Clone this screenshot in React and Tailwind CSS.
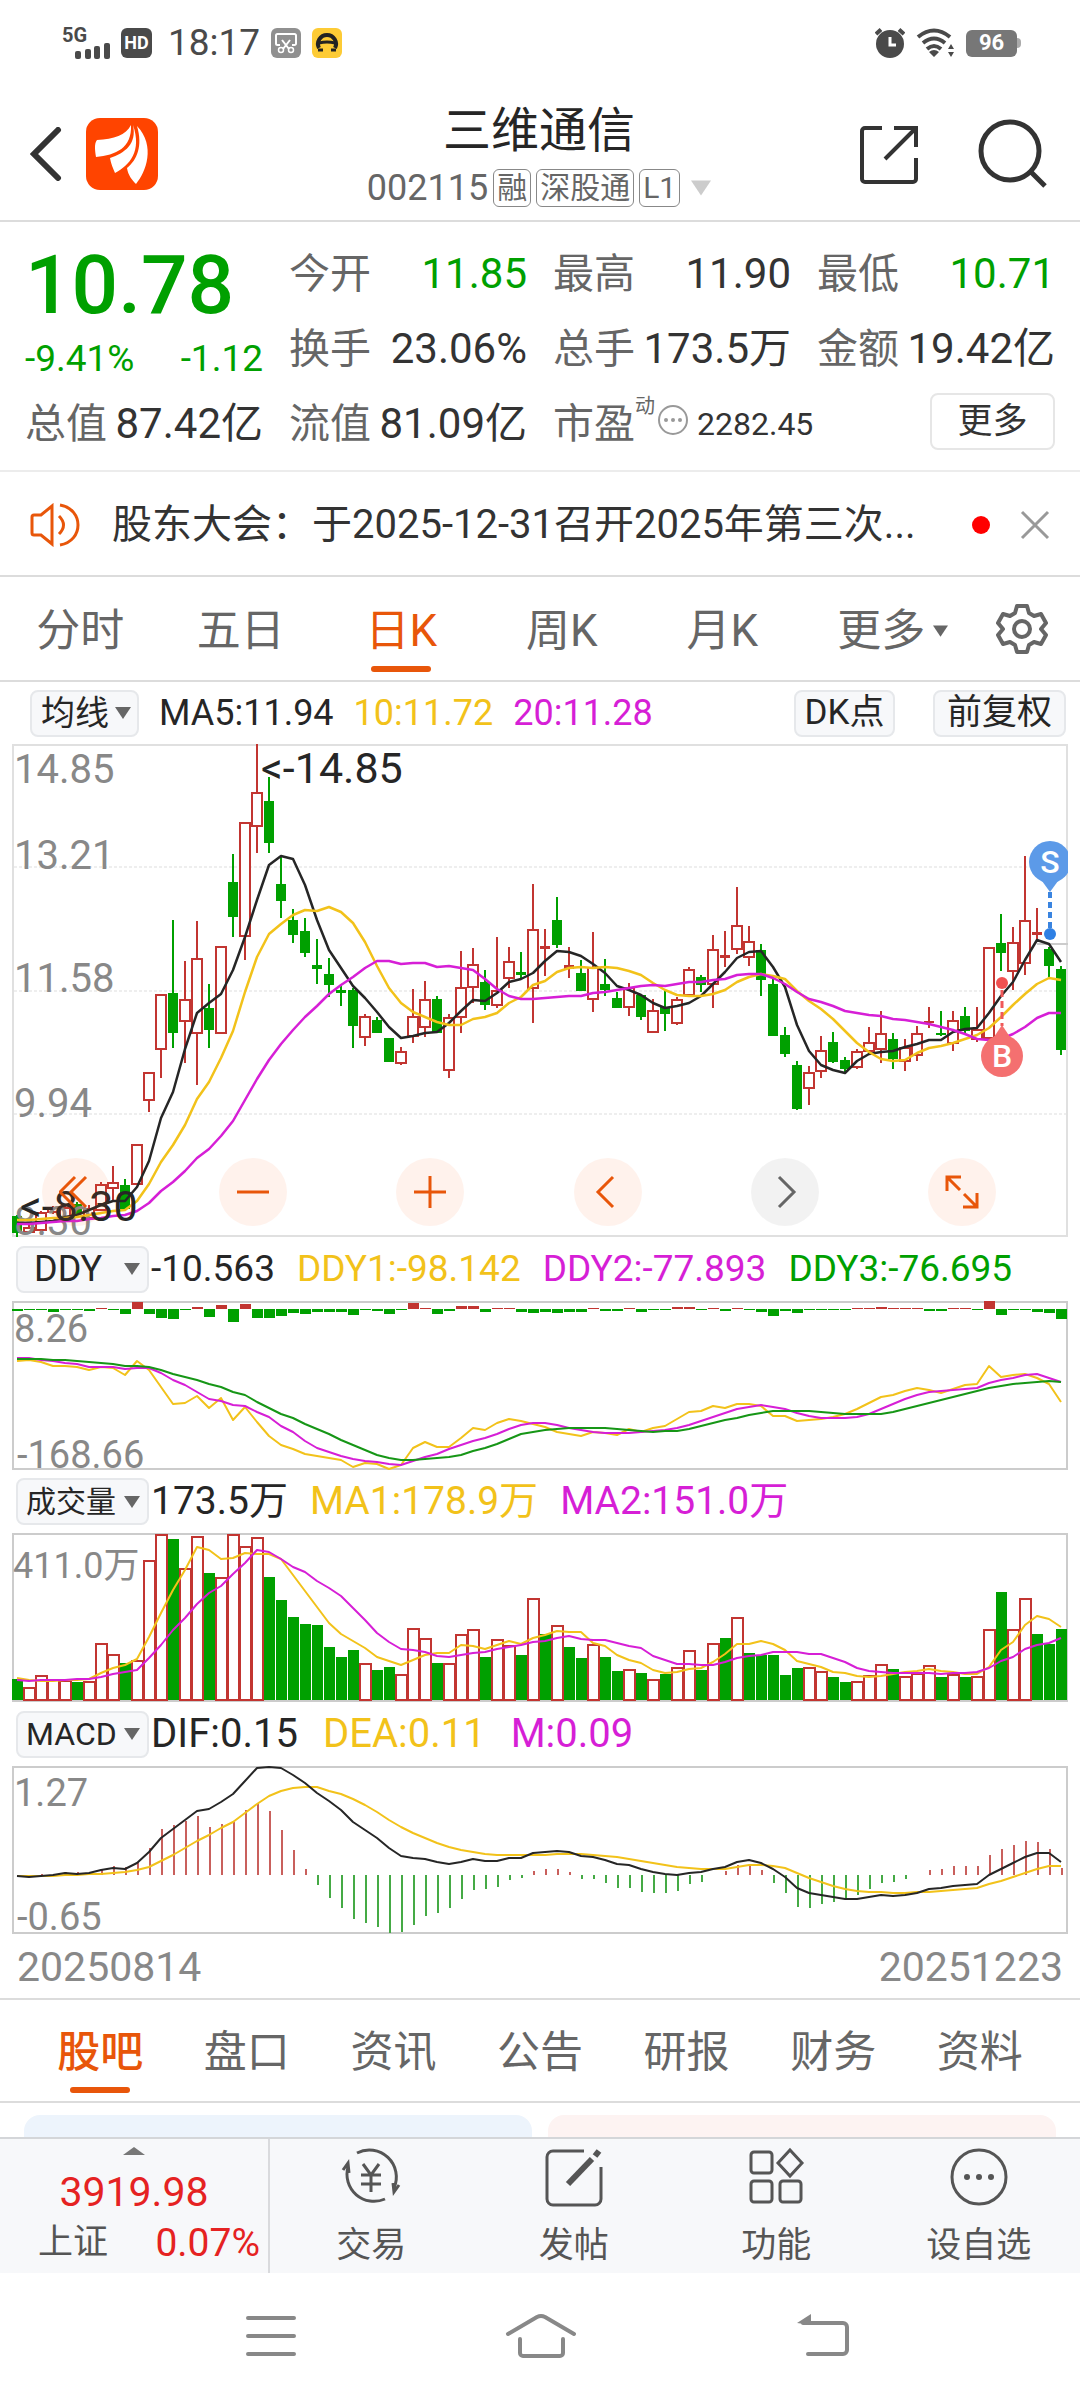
import { useState } from 'react';

const UP = '#c23531';
const DOWN = '#00a000';
const YELLOW = '#f2c21a';
const MAGENTA = '#d61fd6';
const BLACK = '#262626';

// [high, body top, body bottom, low, rising]
const candles = [
    [471, 472, 489, 493, 0], [478, 483, 488, 489, 1], [467, 468, 486, 486, 1], [462, 463, 468, 470, 1],
    [461, 463, 474, 476, 1], [458, 460, 470, 471, 0], [461, 464, 474, 476, 1], [438, 440, 466, 466, 1],
    [422, 438, 444, 456, 1], [435, 441, 465, 466, 0], [400, 400, 440, 440, 1], [328, 328, 356, 368, 1],
    [250, 250, 305, 334, 1], [176, 249, 289, 304, 0], [217, 255, 277, 319, 1], [177, 214, 289, 341, 1],
    [240, 264, 286, 304, 0], [202, 202, 289, 289, 1], [110, 138, 173, 193, 0], [78, 78, 192, 216, 1],
    [0, 48, 82, 109, 1], [33, 57, 99, 109, 0], [112, 140, 157, 174, 0], [165, 176, 191, 199, 0],
    [174, 187, 209, 213, 0], [195, 221, 225, 240, 0], [214, 230, 241, 253, 0], [241, 246, 249, 262, 0],
    [244, 246, 282, 304, 0], [270, 272, 293, 302, 1], [273, 276, 289, 289, 0], [294, 294, 318, 318, 0],
    [303, 307, 319, 321, 1], [245, 272, 292, 299, 1], [237, 255, 283, 293, 1], [252, 255, 289, 289, 0],
    [270, 273, 326, 334, 1], [207, 243, 273, 289, 1], [204, 220, 243, 259, 1], [226, 238, 261, 266, 0],
    [193, 246, 261, 264, 1], [203, 217, 234, 244, 1], [208, 228, 231, 234, 0], [140, 185, 244, 279, 1],
    [185, 202, 205, 232, 1], [153, 176, 201, 204, 0], [203, 221, 225, 234, 1], [216, 229, 247, 247, 0],
    [188, 223, 255, 268, 1], [215, 240, 246, 252, 0], [248, 254, 264, 264, 0], [239, 243, 263, 272, 1],
    [251, 251, 273, 276, 0], [255, 266, 288, 289, 1], [246, 263, 270, 287, 0], [253, 255, 279, 281, 1],
    [223, 225, 251, 253, 1], [231, 233, 241, 248, 0], [191, 205, 240, 264, 1], [187, 211, 214, 223, 1],
    [143, 181, 205, 210, 1], [182, 197, 213, 222, 1], [200, 206, 236, 252, 0], [234, 240, 292, 292, 0],
    [283, 291, 310, 313, 0], [317, 321, 365, 366, 0], [322, 328, 344, 361, 1], [292, 306, 327, 334, 1],
    [288, 298, 318, 319, 0], [313, 316, 325, 328, 0], [305, 307, 323, 325, 1], [283, 298, 307, 310, 1],
    [267, 289, 305, 319, 1], [289, 295, 315, 325, 0], [295, 303, 317, 327, 1], [282, 289, 311, 317, 1],
    [263, 277, 279, 284, 1], [267, 289, 291, 292, 0], [267, 276, 299, 307, 1], [263, 272, 287, 289, 0],
    [263, 285, 295, 298, 1], [203, 203, 294, 308, 1], [170, 199, 209, 227, 0], [183, 198, 227, 246, 1],
    [112, 176, 219, 231, 1], [164, 188, 191, 197, 1], [203, 205, 222, 233, 0], [222, 225, 306, 311, 0],
];

const ma5 = [479, 479, 478, 477, 473, 471, 466, 461, 457, 457, 443, 417, 374, 348, 305, 269, 259, 250, 226, 193, 156, 121, 112, 115, 141, 176, 206, 224, 242, 254, 268, 283, 294, 292, 289, 288, 279, 267, 256, 257, 249, 238, 235, 229, 217, 207, 208, 212, 220, 229, 242, 246, 251, 259, 264, 262, 259, 252, 240, 228, 214, 208, 207, 223, 243, 281, 307, 321, 326, 329, 317, 310, 308, 307, 303, 300, 296, 296, 288, 285, 284, 269, 252, 238, 216, 196, 200, 218];
const ma10 = [476, 476, 475, 474, 474, 473, 471, 469, 467, 466, 457, 440, 418, 401, 381, 355, 338, 314, 287, 248, 213, 190, 180, 171, 166, 167, 163, 168, 179, 198, 222, 244, 259, 268, 273, 278, 281, 281, 275, 273, 269, 259, 253, 241, 237, 228, 224, 223, 224, 223, 224, 227, 231, 239, 246, 251, 252, 252, 250, 246, 238, 233, 230, 232, 235, 247, 257, 265, 275, 287, 299, 308, 315, 317, 316, 309, 304, 302, 299, 295, 291, 284, 273, 261, 250, 240, 234, 236];
const ma20 = [480, 480, 479, 478, 477, 477, 475, 474, 472, 471, 467, 459, 447, 438, 427, 414, 405, 392, 377, 356, 335, 316, 300, 286, 273, 262, 250, 241, 233, 224, 217, 217, 220, 219, 219, 223, 222, 224, 226, 235, 245, 252, 255, 255, 254, 253, 252, 252, 249, 248, 246, 244, 242, 241, 242, 240, 238, 238, 236, 235, 231, 230, 230, 234, 240, 248, 255, 258, 262, 267, 269, 271, 272, 275, 276, 278, 280, 283, 286, 290, 295, 296, 295, 290, 283, 274, 269, 269];

// positive rises above the zero line
const ddyBars = [-2, -1, -1, -3, -1, -1, -2, 1, -1, -5, 7, -5, -9, -10, -1, 2, -8, 4, -13, 5, -9, -9, -7, -4, -5, -3, -3, -3, -6, -1, -2, -5, -1, 6, 1, -5, -2, 3, 3, -3, 1, 1, -3, -4, -3, -4, -3, -3, 1, -2, -2, 1, -3, -1, -1, 2, 2, -1, 1, -2, 1, -1, -3, -7, -2, -4, -1, -1, -1, -1, 1, 1, 2, 1, 1, 1, -2, -2, 1, 1, -1, 8, -6, -1, -1, -3, -4, -10];
const ddy1 = [60, 59, 61, 65, 65, 66, 69, 66, 67, 74, 60, 69, 86, 103, 102, 95, 107, 97, 119, 106, 121, 135, 144, 148, 153, 155, 157, 159, 166, 162, 163, 168, 164, 147, 141, 146, 146, 137, 127, 129, 122, 118, 120, 123, 126, 131, 133, 135, 131, 132, 134, 128, 131, 127, 125, 118, 111, 110, 105, 107, 103, 103, 105, 115, 115, 120, 119, 118, 116, 113, 108, 102, 96, 94, 90, 87, 89, 92, 88, 84, 83, 65, 76, 74, 73, 77, 83, 101];
const ddy2 = [57, 57, 59, 60, 62, 63, 66, 66, 66, 68, 67, 67, 72, 79, 84, 91, 98, 100, 104, 105, 111, 116, 125, 131, 140, 147, 151, 155, 158, 160, 161, 163, 164, 160, 156, 153, 148, 144, 140, 137, 133, 128, 124, 122, 122, 124, 127, 129, 131, 132, 132, 132, 131, 130, 129, 127, 124, 120, 116, 112, 108, 106, 104, 106, 108, 112, 115, 117, 117, 117, 116, 113, 108, 103, 98, 94, 91, 90, 89, 88, 87, 82, 79, 77, 74, 73, 77, 81];
const ddy3 = [58, 58, 58, 59, 59, 60, 61, 62, 63, 65, 65, 66, 69, 73, 76, 79, 83, 86, 91, 94, 101, 107, 113, 117, 123, 128, 133, 139, 144, 149, 154, 157, 159, 159, 158, 157, 156, 154, 150, 147, 143, 138, 133, 131, 129, 128, 127, 127, 127, 127, 128, 129, 130, 131, 130, 130, 128, 125, 122, 119, 117, 114, 112, 110, 110, 110, 110, 111, 112, 113, 113, 113, 113, 111, 108, 105, 102, 99, 96, 93, 90, 87, 85, 83, 82, 81, 80, 81];

const volTops = [146, 154, 142, 146, 147, 149, 148, 110, 121, 130, 127, 27, 1, 6, 35, 3, 40, 44, 1, 13, 4, 44, 67, 84, 91, 92, 114, 124, 117, 130, 137, 134, 141, 95, 105, 130, 130, 101, 96, 124, 106, 112, 122, 65, 101, 92, 114, 125, 111, 124, 138, 136, 140, 146, 141, 134, 117, 137, 110, 105, 84, 120, 122, 122, 142, 135, 134, 138, 144, 149, 148, 142, 131, 136, 143, 140, 132, 144, 141, 144, 143, 96, 59, 96, 65, 101, 111, 96];
const volFalling = [0, 5, 9, 13, 16, 21, 22, 23, 24, 25, 26, 27, 28, 30, 31, 35, 39, 42, 44, 46, 47, 49, 50, 52, 54, 57, 59, 61, 62, 63, 64, 65, 68, 69, 73, 77, 79, 82, 85, 86, 87];
const volMa1 = [145, 147, 148, 148, 147, 147, 146, 140, 135, 132, 126, 104, 80, 57, 37, 14, 17, 26, 25, 20, 21, 21, 26, 42, 58, 74, 90, 101, 108, 115, 124, 128, 132, 127, 122, 120, 120, 112, 113, 116, 112, 108, 111, 105, 102, 98, 99, 99, 110, 113, 122, 127, 130, 137, 140, 139, 136, 135, 129, 121, 111, 111, 108, 111, 117, 128, 131, 134, 139, 140, 143, 144, 143, 141, 139, 138, 136, 138, 139, 141, 141, 134, 117, 109, 92, 83, 86, 94];
const volMa2 = [147, 148, 147, 147, 147, 146, 146, 144, 141, 139, 137, 125, 112, 97, 85, 71, 60, 53, 41, 30, 17, 19, 26, 34, 39, 48, 55, 63, 75, 87, 100, 109, 116, 117, 119, 123, 124, 122, 120, 119, 116, 114, 112, 109, 108, 105, 103, 106, 107, 107, 110, 113, 115, 123, 127, 131, 131, 132, 132, 129, 125, 123, 122, 119, 119, 119, 121, 121, 125, 129, 135, 138, 139, 140, 140, 140, 140, 141, 140, 140, 139, 135, 128, 124, 116, 112, 110, 105];

const macdBars = [111, 111, 108, 108, 106, 106, 106, 103, 100, 101, 96, 82, 63, 59, 55, 50, 61, 58, 56, 44, 37, 45, 64, 84, 103, 119, 132, 142, 153, 157, 161, 167, 166, 159, 150, 147, 142, 133, 124, 123, 121, 114, 112, 105, 103, 103, 106, 113, 113, 117, 122, 122, 126, 127, 127, 125, 118, 116, 109, 105, 99, 99, 104, 117, 127, 141, 142, 138, 136, 133, 129, 123, 117, 116, 113, 109, 104, 103, 100, 100, 100, 89, 83, 79, 75, 76, 83, 102];
const dif = [110, 111, 110, 109, 107, 108, 107, 104, 102, 103, 97, 86, 72, 63, 54, 45, 43, 36, 28, 15, 2, 1, 2, 9, 17, 27, 35, 44, 56, 64, 72, 82, 90, 92, 93, 96, 98, 96, 93, 95, 95, 92, 92, 87, 86, 85, 86, 90, 91, 94, 98, 99, 103, 106, 108, 109, 107, 106, 103, 101, 96, 94, 97, 103, 111, 122, 127, 129, 131, 133, 133, 131, 129, 130, 129, 127, 123, 122, 120, 119, 118, 109, 103, 97, 91, 87, 87, 96];
const dea = [110, 110, 110, 110, 109, 109, 108, 108, 107, 106, 104, 101, 95, 89, 82, 75, 69, 62, 56, 47, 38, 30, 25, 22, 21, 21, 25, 28, 33, 39, 46, 54, 61, 67, 72, 77, 81, 84, 86, 88, 89, 89, 89, 89, 89, 88, 88, 88, 89, 90, 91, 93, 95, 97, 99, 101, 102, 103, 103, 103, 101, 99, 99, 100, 102, 107, 112, 116, 120, 123, 125, 126, 126, 127, 127, 126, 126, 125, 124, 123, 122, 118, 115, 111, 107, 103, 100, 100];

const cx = (i) => 5 + i * 12;

function Line({ data, color, width = 2 }) {
    return (
        <polyline
            points={data.map((y, i) => `${cx(i)},${y}`).join(' ')}
            fill="none"
            stroke={color}
            strokeWidth={width}
            strokeLinejoin="round"
        />
    );
}

function Frame({ height, color = '#cccccc' }) {
    return <rect x="1" y="1" width="1054" height={height - 2} fill="none" stroke={color} strokeWidth="2" />;
}

function KLineChart() {
    return (
        <svg viewBox="0 0 1056 493" className="block w-full overflow-visible">
            <defs>
                <clipPath id="plot">
                    <rect width="1056" height="493" />
                </clipPath>
            </defs>
            <Frame height={493} color="#e0e0e0" />
            {[123, 247, 370].map(y => (
                <line key={y} x1="2" x2="1054" y1={y} y2={y} stroke="#eeeeee" strokeWidth="2" strokeDasharray="3 2" />
            ))}
            <line x1="1025" x2="1056" y1="200" y2="200" stroke="#cccccc" strokeWidth="2" />

            {candles.map(([high, top, bottom, low, rising], i) => {
                const color = rising ? UP : DOWN;
                const thin = bottom - top < 5;
                return (
                    <g key={i}>
                        <line x1={cx(i)} x2={cx(i)} y1={high} y2={top} stroke={color} strokeWidth="2" />
                        <line x1={cx(i)} x2={cx(i)} y1={bottom} y2={low} stroke={color} strokeWidth="2" />
                        {rising && !thin ? (
                            <rect x={cx(i) - 5} y={top + 1} width="10" height={bottom - top - 1} fill="#fff" stroke={color} strokeWidth="2" />
                        ) : (
                            <rect x={cx(i) - 5} y={top} width="10" height={bottom - top} fill={color} />
                        )}
                    </g>
                );
            })}

            {/* Axis labels */}
            <g fill="#888888" fontSize="40">
                <text x="2" y="39">14.85</text>
                <text x="2" y="125">13.21</text>
                <text x="2" y="248">11.58</text>
                <text x="2" y="373">9.94</text>
                <text x="2" y="491">8.30</text>
            </g>

            <Line data={ma5} color={BLACK} width={2.5} />
            <Line data={ma10} color={YELLOW} width={2.5} />
            <Line data={ma20} color={MAGENTA} width={2.5} />

            <g fill={BLACK} fontSize="43">
                <text x="249" y="39">&lt;-14.85</text>
                <text x="8" y="477">&lt;-8.30</text>
            </g>

            {/* Sell marker */}
            <g clipPath="url(#plot)">
                <line x1="1038" x2="1038" y1="148" y2="184" stroke="#3a84e0" strokeWidth="4" strokeDasharray="6 4" />
                <circle cx="1038" cy="190" r="6" fill="#2f80e4" />
                <path d="M1038 148l-8-11h16z" fill="#5c9ae8" />
                <circle cx="1038" cy="118" r="21" fill="#5c9ae8" />
            </g>
            <text x="1038" y="129" textAnchor="middle" fontSize="32" fontWeight="500" fill="#fff">S</text>

            {/* Buy marker */}
            <line x1="990" x2="990" y1="246" y2="282" stroke="#f05858" strokeWidth="3" strokeDasharray="7 4" />
            <circle cx="990" cy="239" r="6" fill="#f05050" />
            <path d="M990 281l-8 12h16z" fill="#f47070" />
            <circle cx="990" cy="312" r="21" fill="#f47070" />
            <text x="990" y="323" textAnchor="middle" fontSize="32" fontWeight="500" fill="#fff">B</text>
        </svg>
    );
}

function DdyChart() {
    return (
        <svg viewBox="0 0 1056 169" className="block w-full overflow-visible">
            <Frame height={169} />
            {ddyBars.map((v, i) => (
                <rect key={i} x={cx(i) - 5} y={v > 0 ? 8 - v : 8} width="11" height={Math.abs(v)} fill={v > 0 ? UP : DOWN} />
            ))}
            <g fill="#888888" fontSize="38">
                <text x="2" y="41">8.26</text>
                <text x="5" y="167">-168.66</text>
            </g>
            <Line data={ddy1} color={YELLOW} />
            <Line data={ddy2} color={MAGENTA} />
            <Line data={ddy3} color="#169616" />
        </svg>
    );
}

function VolumeChart() {
    return (
        <svg viewBox="0 0 1056 169" className="block w-full">
            <Frame height={169} />
            <text x="1" y="45" fill="#888888" fontSize="36">411.0万</text>
            {volTops.map((top, i) => (
                volFalling.includes(i) ? (
                    <rect key={i} x={cx(i) - 5} y={top} width="11" height={167 - top} fill={DOWN} />
                ) : (
                    <rect key={i} x={cx(i) - 5} y={top + 1} width="11" height={166 - top} fill="#fff" stroke={UP} strokeWidth="2" />
                )
            ))}
            <Line data={volMa1} color={YELLOW} />
            <Line data={volMa2} color={MAGENTA} />
        </svg>
    );
}

function MacdChart() {
    return (
        <svg viewBox="0 0 1056 168" className="block w-full overflow-visible">
            <Frame height={168} />
            {macdBars.map((y, i) => (
                <rect
                    key={i}
                    x={cx(i)}
                    y={Math.min(y, 109)}
                    width="2"
                    height={Math.abs(y - 109)}
                    fill={y < 109 ? '#c9605c' : '#45aa45'}
                />
            ))}
            <g fill="#888888" fontSize="38">
                <text x="2" y="40">1.27</text>
                <text x="5" y="164">-0.65</text>
            </g>
            <Line data={dea} color={YELLOW} />
            <Line data={dif} color={BLACK} />
        </svg>
    );
}

function Caret({ className }) {
    return (
        <svg viewBox="0 0 16 12" className={className} fill="currentColor">
            <path d="M0 0h16L8 12z" />
        </svg>
    );
}

function IndicatorSelect({ label, options, className, caretClass }) {
    return (
        <div className="relative flex shrink-0 items-center">
            <select
                aria-label={label}
                className={`h-[47px] appearance-none rounded-lg border-2 border-[#e6e8eb] bg-[#f7f8fa] leading-[43px] text-[#262626] outline-none ${className}`}
            >
                {options.map(o => <option key={o}>{o}</option>)}
            </select>
            <Caret className={`pointer-events-none absolute h-3 w-4 text-[#666] ${caretClass}`} />
        </div>
    );
}

function StatItem({ label, value, valueClass = 'text-[#333]' }) {
    return (
        <div className="flex items-center justify-between whitespace-nowrap text-[41px] leading-[56px]">
            <span className="text-[#666]">{label}</span>
            <span className={`text-[42px] ${valueClass}`}>{value}</span>
        </div>
    );
}

function StatusBar() {
    return (
        <div className="flex h-[86px] items-center justify-between pl-[62px] pr-[59px] text-[#4a4a4a]">
            <div className="flex items-center">
                <svg viewBox="0 0 50 34" className="h-[34px] w-[50px] overflow-visible" fill="currentColor">
                    <text x="0" y="16" fontSize="20" fontWeight="700">5G</text>
                    <rect x="13" y="25" width="6" height="8" rx="2" />
                    <rect x="23" y="23" width="6" height="10" rx="2" />
                    <rect x="32" y="20" width="6" height="13" rx="2" />
                    <rect x="42" y="17" width="6" height="16" rx="2" />
                </svg>
                <span className="ml-[9px] flex h-[30px] w-[31px] items-center justify-center rounded-md bg-[#4a4a4a] text-[18px] font-bold leading-none text-white">HD</span>
                <span className="ml-4 text-[37px] leading-[44px]">18:17</span>
                <svg viewBox="0 0 30 30" className="ml-[11px] h-[30px] w-[30px]">
                    <rect width="30" height="30" rx="6" fill="#909090" />
                    <path d="M9 17H6.500a1.500 1.500 0 0 1-1.500-1.500V7.500A1.500 1.500 0 0 1 6.500 6h17A1.500 1.500 0 0 1 25 7.500v8a1.500 1.500 0 0 1-1.500 1.500H21M11 12l7 9M19 12l-7 9" fill="none" stroke="#fff" strokeWidth="2" />
                    <circle cx="10" cy="22" r="2.500" fill="none" stroke="#fff" strokeWidth="1.500" />
                    <circle cx="20" cy="22" r="2.500" fill="none" stroke="#fff" strokeWidth="1.500" />
                </svg>
                <svg viewBox="0 0 30 30" className="ml-[11px] h-[30px] w-[30px]">
                    <rect width="30" height="30" rx="6" fill="#fdcb35" />
                    <path d="M7 20a9 9 0 1 1 16 0" fill="none" stroke="#222" strokeWidth="4" />
                    <path d="M7 15q8-2 16 0M6 22h5M19 22h5" fill="none" stroke="#222" strokeWidth="3" />
                </svg>
            </div>

            <div className="flex items-center">
                <svg viewBox="0 0 30 30" className="h-[30px] w-[30px]">
                    <circle cx="15" cy="16" r="14" fill="currentColor" />
                    <path d="M1 6l5-4.500M29 6l-5-4.500" stroke="currentColor" strokeWidth="4" />
                    <path d="M15 9v8h6" fill="none" stroke="#fff" strokeWidth="3" />
                </svg>
                <svg viewBox="0 0 38 30" className="ml-[11px] h-[30px] w-[38px]">
                    <g fill="none" stroke="currentColor" strokeWidth="4">
                        <path d="M2 9q16-13 32 0" />
                        <path d="M7 15q11-9 22 0" />
                        <path d="M11 21q7-6 14 0" />
                    </g>
                    <path d="M13 24q5-4 10 0l-5 5zM35 16l3 5h-6zM35 29l3-5h-6z" fill="currentColor" />
                </svg>
                <span className="ml-3 flex h-[27px] w-[51px] items-center justify-center rounded-md bg-[#777] text-[22px] font-bold leading-none text-white">96</span>
                <span className="h-[10px] w-1 rounded-r bg-[#aaa]" />
            </div>
        </div>
    );
}

function Header() {
    return (
        <header className="flex h-[136px] items-center border-b-2 border-[#dcdcdc] pl-[30px] pr-8 pt-[2px]">
            <div className="flex flex-1 items-center gap-6">
                <button aria-label="返回">
                    <svg viewBox="0 0 32 54" className="block h-[54px] w-8" fill="none" stroke="#333" strokeWidth="6" strokeLinecap="round">
                        <path d="M28 3L4 27l24 24" />
                    </svg>
                </button>
                <a href="#home" aria-label="东方财富">
                    <svg viewBox="0 0 72 72" className="block h-[72px] w-[72px]">
                        <rect width="72" height="72" rx="14" fill="#ff4400" />
                        <g fill="#fff">
                            <path d="M45 7C40 17 28 21 11 22c-3 4-2 10-1 17C30 37 46 30 45 7z" />
                            <path d="M47 7c4 19-8 28-23 33 1 6 3 10 5 15C44 47 56 33 47 7z" />
                            <path d="M51 8c6 20 0 34-10 42 1 7 5 12 9 16C60 54 70 28 51 8z" />
                        </g>
                    </svg>
                </a>
            </div>

            <div className="flex flex-col items-center gap-2 pt-[2px]">
                <h1 className="text-[48px] leading-[58px] text-[#262626]">三维通信</h1>
                <div className="flex h-10 items-center gap-[5px] text-[#666]">
                    <span className="text-[36px] leading-10">002115</span>
                    {['融', '深股通', 'L1'].map(tag => (
                        <span key={tag} className="rounded-md border border-[#888] px-[3px] text-[30px] leading-[36px]">{tag}</span>
                    ))}
                    <Caret className="ml-[6px] h-4 w-5 text-[#ccc]" />
                </div>
            </div>

            <div className="flex flex-1 items-center justify-end gap-[60px]">
                <button aria-label="分享">
                    <svg viewBox="0 0 60 60" className="block h-[60px] w-[60px]" fill="none" stroke="#333" strokeWidth="4">
                        <path d="M24 4H7a3 3 0 0 0-3 3v48a3 3 0 0 0 3 3h48a3 3 0 0 0 3-3V34" />
                        <path d="M36 4h22v19M57 5L27 35" />
                    </svg>
                </button>
                <button aria-label="搜索">
                    <svg viewBox="0 0 70 70" className="block h-[70px] w-[70px]" fill="none" stroke="#333" strokeWidth="5">
                        <circle cx="32" cy="32" r="29" />
                        <path d="M53 53l14 14" />
                    </svg>
                </button>
            </div>
        </header>
    );
}

function Quote() {
    return (
        <section className="grid auto-rows-[75px] grid-cols-4 gap-x-[26px] border-b-2 border-[#ececec] px-[25px] pb-[9px] pt-[14px]">
            <div className="row-span-2 flex flex-col justify-center pt-1 text-[#00a000]">
                <span className="text-[82px] font-medium leading-[92px]">10.78</span>
                <div className="flex justify-between text-[37px] leading-[56px]">
                    <span>-9.41%</span>
                    <span>-1.12</span>
                </div>
            </div>
            <StatItem label="今开" value="11.85" valueClass="text-[#00a000]" />
            <StatItem label="最高" value="11.90" />
            <StatItem label="最低" value="10.71" valueClass="text-[#00a000]" />
            <StatItem label="换手" value="23.06%" />
            <StatItem label="总手" value="173.5万" />
            <StatItem label="金额" value="19.42亿" />
            <StatItem label="总值" value="87.42亿" />
            <StatItem label="流值" value="81.09亿" />
            <div className="col-span-2 flex items-center whitespace-nowrap">
                <span className="text-[41px] leading-[56px] text-[#666]">市盈</span>
                <span className="mb-9 text-[20px] leading-6 text-[#666]">动</span>
                <svg viewBox="0 0 32 32" className="mb-2 ml-[2px] h-8 w-8">
                    <circle cx="16" cy="16" r="14" fill="none" stroke="#999" strokeWidth="2" />
                    <g fill="#999">
                        <circle cx="9" cy="16" r="2" />
                        <circle cx="16" cy="16" r="2" />
                        <circle cx="23" cy="16" r="2" />
                    </g>
                </svg>
                <span className="ml-2 text-[32px] leading-[56px] text-[#333]">2282.45</span>
                <button className="mb-1 ml-auto h-[57px] w-[125px] rounded-lg border-2 border-[#e6e6e6] text-[35px] leading-[50px] text-[#333]">更多</button>
            </div>
        </section>
    );
}

function Notice() {
    return (
        <section className="flex h-[105px] items-center border-b-2 border-[#dcdcdc] px-[30px] pt-[2px]">
            <svg viewBox="0 0 50 44" className="h-11 w-[50px] shrink-0" fill="none" stroke="#e8560a" strokeWidth="3">
                <path d="M22 3v38L11 32H4a2 2 0 0 1-2-2V14a2 2 0 0 1 2-2h7z" />
                <path d="M29 13q9 9 0 18" />
                <path d="M30 2c24 4 24 36 0 40" />
            </svg>
            <a href="#notice" className="ml-8 min-w-0 flex-1 truncate text-[40px] leading-[56px] text-[#333]">
                股东大会：于2025-12-31召开2025年第三次...
            </a>
            <span className="ml-4 h-[18px] w-[18px] shrink-0 rounded-full bg-[#ff0000]" />
            <button aria-label="关闭" className="ml-[30px]">
                <svg viewBox="0 0 30 30" className="block h-[30px] w-[30px]" stroke="#999" strokeWidth="3">
                    <path d="M2 2l26 26M28 2L2 28" />
                </svg>
            </button>
        </section>
    );
}

function PeriodTabs() {
    const [active, setActive] = useState('日K');
    return (
        <nav className="flex h-[105px] border-b-2 border-[#dcdcdc] text-[44px]">
            {['分时', '五日', '日K', '周K', '月K', '更多'].map(tab => (
                <button
                    key={tab}
                    onClick={() => setActive(tab)}
                    className={`relative flex flex-1 items-center justify-center pt-1 ${active === tab ? 'text-[#e8560a]' : 'text-[#666]'}`}
                >
                    {tab === '更多' ? (
                        <span className="flex items-center gap-2 pl-5">
                            {tab}
                            <Caret className="h-3 w-[15px]" />
                        </span>
                    ) : tab}
                    {active === tab && <span className="absolute bottom-2 h-[6px] w-[60px] rounded-full bg-[#e8560a]" />}
                </button>
            ))}
            <button aria-label="设置" className="flex w-[117px] items-center justify-center">
                <svg viewBox="0 0 52 52" className="h-[52px] w-[52px]" fill="none" stroke="#666" strokeWidth="4" strokeLinejoin="round">
                    <path d="M21 3h10l2 7 5 3 7-2 5 9-5 6 5 6-5 9-7-2-5 3-2 7H21l-2-7-5-3-7 2-5-9 5-6-5-6 5-9 7 2 5-3z" />
                    <circle cx="26" cy="26" r="8" />
                </svg>
            </button>
        </nav>
    );
}

const roundBtn = 'flex h-[68px] w-[68px] items-center justify-center rounded-full';

function ChartControls() {
    const controls = [
        { label: '最早', d: 'M16 2L1 17l15 15M27 2L12 17l15 15' },
        { label: '缩小', d: 'M1 17h32' },
        { label: '放大', d: 'M1 17h32M17 1v32' },
        { label: '向左', d: 'M22 2L7 17l15 15' },
        { label: '向右', d: 'M11 2l15 15-15 15', muted: true },
        { label: '全屏', d: 'M2 16V2h14M3 3l12 12M32 18v14H18M31 31L19 19' },
    ];
    return (
        <div className="absolute bottom-[11px] left-0 flex w-full justify-between pl-[30px] pr-[72px]">
            {controls.map(({ label, d, muted }) => (
                <button key={label} aria-label={label} className={`${roundBtn} ${muted ? 'bg-black/5 text-[#666]' : 'bg-[#ff5a14]/8 text-[#e8560a]'}`}>
                    <svg viewBox="0 0 34 34" className="h-[34px] w-[34px]" fill="none" stroke="currentColor" strokeWidth="3">
                        <path d={d} />
                    </svg>
                </button>
            ))}
        </div>
    );
}

function Charts() {
    const small = 'h-[47px] rounded-lg border-2 border-[#e6e8eb] bg-[#f7f8fa] leading-[40px] text-[#262626]';
    return (
        <main className="px-3">
            <div className="flex h-[62px] items-center whitespace-nowrap pl-[18px] pr-[2px] text-[36px]">
                <IndicatorSelect label="主图指标" options={['均线', 'BOLL']} className="w-[109px] pl-[9px] text-[34px]" caretClass="right-2" />
                <div className="ml-5 flex flex-1 gap-5">
                    <span className="text-[#262626]">MA5:11.94</span>
                    <span className="text-[#f2c21a]">10:11.72</span>
                    <span className="text-[#d61fd6]">20:11.28</span>
                </div>
                <button className={`${small} w-[101px] text-[35px]`}>DK点</button>
                <button className={`ml-[38px] ${small} w-[133px] text-[35px]`}>前复权</button>
            </div>
            <div className="relative">
                <KLineChart />
                <ChartControls />
            </div>

            <div className="flex h-16 items-center whitespace-nowrap pl-1 text-[37px]">
                <IndicatorSelect label="副图一" options={['DDY', '成交量', 'MACD']} className="w-[133px] pl-4 text-[36px]" caretClass="right-[9px]" />
                <div className="ml-[2px] flex gap-[22px]">
                    <span className="text-[#262626]">-10.563</span>
                    <span className="text-[#f2c21a]">DDY1:-98.142</span>
                    <span className="text-[#d61fd6]">DDY2:-77.893</span>
                    <span className="text-[#00a000]">DDY3:-76.695</span>
                </div>
            </div>
            <DdyChart />

            <div className="flex h-[63px] items-center whitespace-nowrap pl-1 text-[39px]">
                <IndicatorSelect label="副图二" options={['成交量', 'DDY', 'MACD']} className="w-[133px] pl-2 text-[30px]" caretClass="right-[9px]" />
                <div className="ml-[2px] flex gap-[22px]">
                    <span className="text-[#262626]">173.5万</span>
                    <span className="text-[#f2c21a]">MA1:178.9万</span>
                    <span className="text-[#d61fd6]">MA2:151.0万</span>
                </div>
            </div>
            <VolumeChart />

            <div className="flex h-16 items-center whitespace-nowrap pl-1 text-[40px]">
                <IndicatorSelect label="副图三" options={['MACD', 'DDY', '成交量']} className="w-[133px] pl-2 text-[32px]" caretClass="right-[9px]" />
                <div className="ml-[2px] flex gap-[25px]">
                    <span className="text-[#262626]">DIF:0.15</span>
                    <span className="text-[#f2c21a]">DEA:0.11</span>
                    <span className="text-[#d61fd6]">M:0.09</span>
                </div>
            </div>
            <MacdChart />

            <div className="flex h-16 items-center justify-between px-[5px] pt-1 text-[41px] text-[#888]">
                <span>20250814</span>
                <span>20251223</span>
            </div>
        </main>
    );
}

function InfoTabs() {
    const [active, setActive] = useState('股吧');
    return (
        <nav className="flex h-[105px] border-y-2 border-[#dcdcdc] px-[27px] text-[43px]">
            {['股吧', '盘口', '资讯', '公告', '研报', '财务', '资料'].map(tab => (
                <button
                    key={tab}
                    onClick={() => setActive(tab)}
                    className={`relative flex flex-1 items-center justify-center pt-1 ${active === tab ? 'font-medium text-[#e8560a]' : 'text-[#666]'}`}
                >
                    {tab}
                    {active === tab && <span className="absolute bottom-2 h-[6px] w-[60px] rounded-full bg-[#e8560a]" />}
                </button>
            ))}
        </nav>
    );
}

function BottomBar() {
    const actions = [
        {
            label: '交易',
            icon: (
                <>
                    <path d="M16 6a27 27 0 0 1 37 35M44 52A27 27 0 0 1 7 20M2 23l5-7 1 10M58 38l-5 7-1-9" />
                    <path d="M22 17l8 11 8-11M20 28h20M20 37h20M30 28v17" />
                </>
            ),
        },
        {
            label: '发帖',
            icon: (
                <>
                    <path d="M40 4H9a6 6 0 0 0-6 6v42a6 6 0 0 0 6 6h42a6 6 0 0 0 6-6V20" />
                    <path d="M24 37l24-25" strokeWidth="6" />
                    <path d="M51 9l4-5" strokeWidth="6" />
                </>
            ),
        },
        {
            label: '功能',
            icon: (
                <>
                    <rect x="5" y="5" width="21" height="21" rx="3" />
                    <rect x="5" y="34" width="21" height="21" rx="3" />
                    <rect x="34" y="34" width="21" height="21" rx="3" />
                    <path d="M44 3l12 13-12 13-12-13z" />
                </>
            ),
        },
        {
            label: '设自选',
            icon: (
                <>
                    <circle cx="30" cy="30" r="27" />
                    <g fill="currentColor" stroke="none">
                        <circle cx="18" cy="30" r="3" />
                        <circle cx="30" cy="30" r="3" />
                        <circle cx="42" cy="30" r="3" />
                    </g>
                </>
            ),
        },
    ];
    return (
        <footer className="flex h-[136px] border-t-2 border-[#d4d6d9] bg-[#f7f8fa]">
            <a href="#index" className="flex w-1/4 flex-col items-center border-r-2 border-[#d9dadd] text-[#e52222]">
                <svg viewBox="0 0 22 8" className="mt-2 h-2 w-[22px]" fill="#777"><path d="M11 0l11 8H0z" /></svg>
                <span className="mt-[10px] text-[41px] leading-[54px]">3919.98</span>
                <span className="flex w-full items-center justify-between pl-[38px] pr-2 leading-[48px]">
                    <span className="text-[35px] text-[#555]">上证</span>
                    <span className="text-[39px]">0.07%</span>
                </span>
            </a>
            {actions.map(({ label, icon }) => (
                <button key={label} className="flex flex-1 flex-col items-center pt-2 text-[#555]">
                    <svg viewBox="0 0 60 60" className="h-[60px] w-[60px]" fill="none" stroke="currentColor" strokeWidth="3">{icon}</svg>
                    <span className="mt-[14px] text-[35px] leading-[50px]">{label}</span>
                </button>
            ))}
        </footer>
    );
}

function SystemNav() {
    return (
        <div className="flex h-[126px] items-center justify-center gap-[208px] pl-[14px] text-[#888]">
            <button aria-label="菜单">
                <svg viewBox="0 0 52 44" className="block h-11 w-[52px]" stroke="currentColor" strokeWidth="4" strokeLinecap="round">
                    <path d="M3 4h46M3 22h46M3 40h46" />
                </svg>
            </button>
            <button aria-label="主页">
                <svg viewBox="0 0 72 46" className="block h-[46px] w-[72px]" fill="none" stroke="currentColor" strokeWidth="4" strokeLinecap="round" strokeLinejoin="round">
                    <path d="M3 21L32 4q4-2 8 0l29 17" />
                    <path d="M15 26v14a3 3 0 0 0 3 3h37a3 3 0 0 0 3-3V26" />
                </svg>
            </button>
            <button aria-label="后退" className="ml-3">
                <svg viewBox="0 0 52 44" className="block h-11 w-[52px]" fill="none" stroke="currentColor" strokeWidth="4" strokeLinecap="round">
                    <path d="M6 9h40a4 4 0 0 1 4 4v23a4 4 0 0 1-4 4H11" />
                    <path d="M0 9L14 0v11z" fill="currentColor" stroke="none" />
                </svg>
            </button>
        </div>
    );
}

export default function App() {
    return (
        <div className="min-h-screen bg-white font-['Roboto','Noto_Sans_CJK_SC',sans-serif]">
            <StatusBar />
            <Header />
            <Quote />
            <Notice />
            <PeriodTabs />
            <Charts />
            <InfoTabs />
            <div className="grid grid-cols-2 gap-4 px-6 pt-3">
                <div className="h-[22px] rounded-t-2xl bg-[#edf4fc]" />
                <div className="h-[22px] rounded-t-2xl bg-[#fdf3f2]" />
            </div>
            <BottomBar />
            <SystemNav />
        </div>
    );
}
